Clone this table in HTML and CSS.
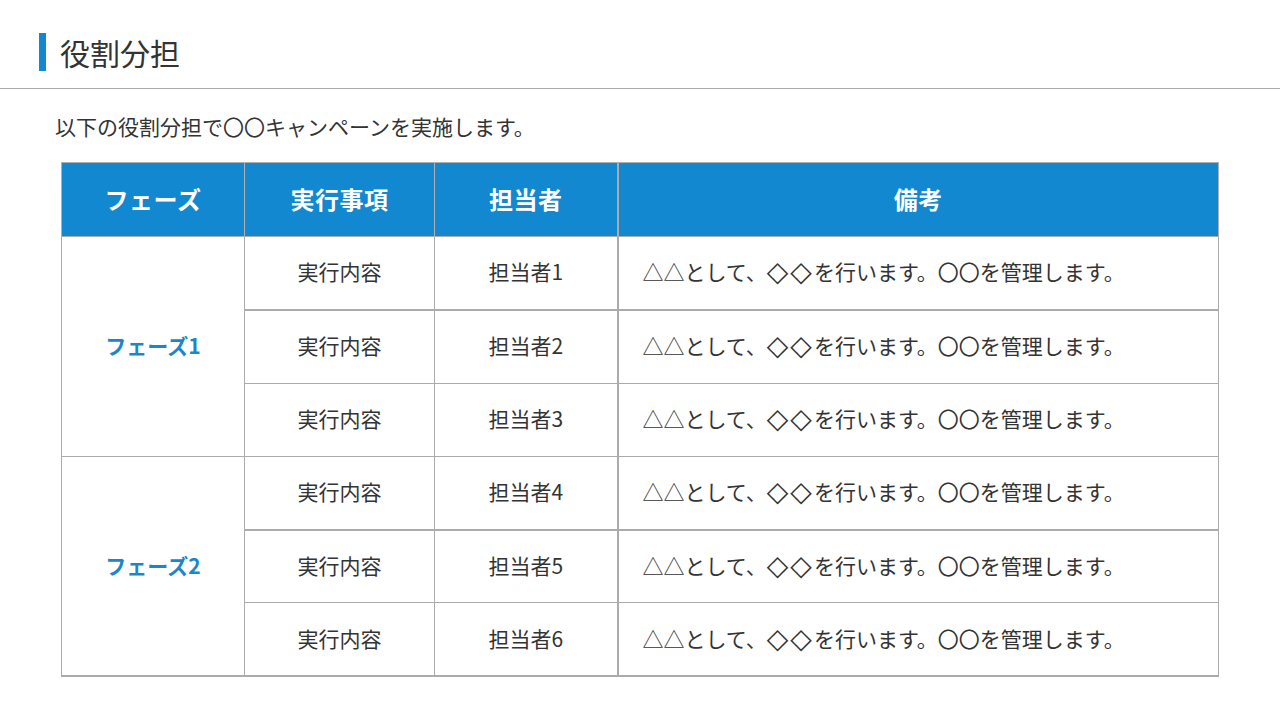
FILE: index.html
```html
<!DOCTYPE html>
<html lang="ja">
<head>
<meta charset="utf-8">
<link rel="stylesheet" href="styles.css">
</head>
<body>
<div class="page">
  <header class="title-bar">
    <span class="accent"></span>
    <h1 class="title">役割分担</h1>
  </header>
  <p class="lead">以下の役割分担で〇〇キャンペーンを実施します。</p>
  <table class="roles">
    <colgroup>
      <col class="c1"><col class="c2"><col class="c3"><col class="c4">
    </colgroup>
    <thead>
      <tr><th>フェーズ</th><th>実行事項</th><th>担当者</th><th class="sep">備考</th></tr>
    </thead>
    <tbody>
      <tr><td class="phase" rowspan="3">フェーズ1</td><td>実行内容</td><td>担当者1</td><td class="note sep">△△として、<span class="sym">◇◇</span>を行います。〇〇を管理します。</td></tr>
      <tr class="thick"><td>実行内容</td><td>担当者2</td><td class="note sep">△△として、<span class="sym">◇◇</span>を行います。〇〇を管理します。</td></tr>
      <tr><td>実行内容</td><td>担当者3</td><td class="note sep">△△として、<span class="sym">◇◇</span>を行います。〇〇を管理します。</td></tr>
      <tr><td class="phase last" rowspan="3">フェーズ2</td><td>実行内容</td><td>担当者4</td><td class="note sep">△△として、<span class="sym">◇◇</span>を行います。〇〇を管理します。</td></tr>
      <tr class="thick"><td>実行内容</td><td>担当者5</td><td class="note sep">△△として、<span class="sym">◇◇</span>を行います。〇〇を管理します。</td></tr>
      <tr><td>実行内容</td><td>担当者6</td><td class="note sep">△△として、<span class="sym">◇◇</span>を行います。〇〇を管理します。</td></tr>
    </tbody>
  </table>
</div>
</body>
</html>
```
FILE: styles.css
```css
* { box-sizing: border-box; }
html, body { margin: 0; padding: 0; background: #ffffff; }
body {
  font-family: "Noto Sans CJK JP", "Noto Sans", sans-serif;
  color: #333333;
  width: 1280px;
  height: 720px;
  overflow: hidden;
}
.page { width: 1280px; }
.title-bar {
  display: flex;
  align-items: center;
  gap: 14px;
  height: 89px;
  padding: 33px 0 18px 39px;
  border-bottom: 1px solid #a9a9a9;
}
.accent {
  width: 7px;
  height: 38px;
  background: #1188d0;
}
.title {
  margin: 0;
  font-size: 30px;
  font-weight: 400;
  line-height: 38px;
  color: #333;
}
.lead {
  margin: 0;
  padding: 22px 0 0 55px;
  height: 73px;
  font-size: 21px;
  line-height: 30px;
  color: #333;
}
.roles {
  margin-left: 61px;
  width: 1157px;
  border-collapse: collapse;
  table-layout: fixed;
}
.c1 { width: 183px; }
.c2 { width: 190px; }
.c3 { width: 183px; }
.c4 { width: 601px; }
.roles th {
  height: 74px;
  background: #1188d0;
  color: #ffffff;
  font-size: 24px;
  letter-spacing: 0.5px;
  font-weight: 700;
  text-align: center;
  border: 1px solid #b0b0b0;
  border-bottom: none;
  padding: 0 0 2px;
}
.roles td {
  height: 73.3px;
  border: 1px solid #ababab;
  text-align: center;
  font-size: 21px;
  line-height: 30px;
  color: #333;
  padding: 0 0 3px;
}
.roles td.sep, .roles th.sep { border-left: 2px solid #ababab; }
.roles tr.thick td { border-top: 2px solid #ababab; }
.roles td.note {
  text-align: left;
  padding-left: 24px;
}
.roles td.phase {
  color: #1a87cc;
  font-weight: 700;
}
.sym {
  font-family: "DejaVu Sans", sans-serif;
  font-size: 28px;
  line-height: 0;
  letter-spacing: 2px;
  vertical-align: -1px;
  color: #333;
}
.roles tbody tr:last-child td,
.roles td.phase.last { border-bottom: 2px solid #ababab; }
```
